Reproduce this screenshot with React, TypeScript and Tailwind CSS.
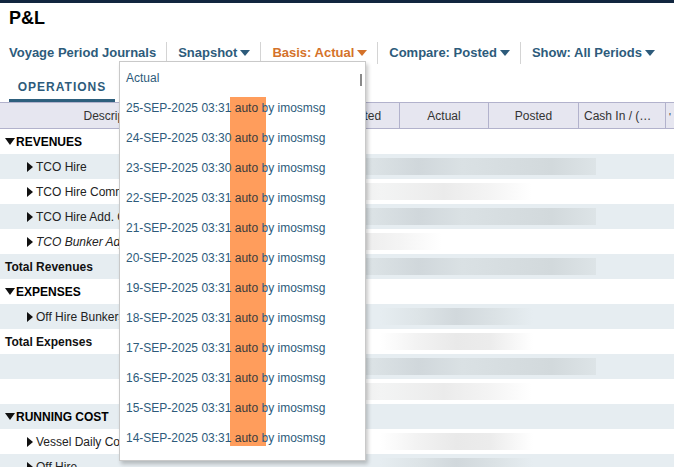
import React from "react";

type Row = {
  label: string;
  kind: "section" | "child" | "total" | "blank";
  italic?: boolean;
  bar?: "long" | "fade" | "short" | "midGray" | "midWhite";
};

const rows: Row[] = [
  { label: "REVENUES", kind: "section" },
  { label: "TCO Hire", kind: "child", bar: "long" },
  { label: "TCO Hire Commission", kind: "child", bar: "fade" },
  { label: "TCO Hire Add. Commission", kind: "child", bar: "long" },
  { label: "TCO Bunker Adjustment", kind: "child", italic: true, bar: "short" },
  { label: "Total Revenues", kind: "total", bar: "long" },
  { label: "EXPENSES", kind: "section" },
  { label: "Off Hire Bunkers", kind: "child", bar: "midGray" },
  { label: "Total Expenses", kind: "total", bar: "midWhite" },
  { label: "", kind: "blank", bar: "long" },
  { label: "", kind: "blank", bar: "fade" },
  { label: "RUNNING COST", kind: "section" },
  { label: "Vessel Daily Cost", kind: "child", bar: "midWhite" },
  { label: "Off Hire", kind: "child", bar: "midGray" },
];

const barClass: Record<NonNullable<Row["bar"]>, string> = {
  long: "ml-[72px] w-[296px] bg-[linear-gradient(90deg,#d1d8dc_0%,#dbe2e5_25%,#d0d7db_40%,#dae1e4_55%,#d6dde0_70%,#d2d9dc_85%,#dde4e7_100%)]",
  fade: "ml-[72px] w-[232px] bg-[linear-gradient(90deg,#e2e2e2_0%,#f3f4f4_35%,#ebebeb_62%,#f4f4f4_82%,#ffffff_100%)]",
  short: "ml-[72px] w-[142px] bg-[linear-gradient(90deg,#e2e2e2_0%,#ececec_40%,#f4f4f4_70%,#ffffff_100%)]",
  midGray: "ml-[152px] w-[153px] bg-[linear-gradient(90deg,#e6edf1_0%,#dde4e7_25%,#d1d8dc_50%,#dbe2e5_75%,#e6edf1_100%)]",
  midWhite: "ml-[152px] w-[153px] bg-[linear-gradient(90deg,#ffffff_0%,#f2f2f2_25%,#e9e9e9_50%,#ececec_72%,#ffffff_100%)]",
};

const dates = [
  "25-SEP-2025 03:31",
  "24-SEP-2025 03:30",
  "23-SEP-2025 03:30",
  "22-SEP-2025 03:31",
  "21-SEP-2025 03:31",
  "20-SEP-2025 03:31",
  "19-SEP-2025 03:31",
  "18-SEP-2025 03:31",
  "17-SEP-2025 03:31",
  "16-SEP-2025 03:31",
  "15-SEP-2025 03:31",
  "14-SEP-2025 03:31",
];

const Caret = ({ className }: { className?: string }) => (
  <svg width="10" height="6" viewBox="0 0 10 6" className={className}>
    <path d="M0 0 L10 0 L5 6 Z" fill="currentColor" />
  </svg>
);

const Separator = () => <div className="ml-[10px] mr-[11px] h-[22px] w-px bg-[#d4d4d4]" />;

const ToolbarItem = ({ label, orange }: { label: string; orange?: boolean }) => (
  <div className={`flex items-center gap-[3px] ${orange ? "text-[#d4722a]" : "text-[#2d5b7b]"}`}>
    <span>{label}</span>
    <Caret />
  </div>
);

const SnapshotMenu = () => (
  <div className="absolute left-[119px] top-[61px] w-[247px] h-[400px] bg-white border border-[#c9c9c9] shadow-[2px_3px_4px_rgba(0,0,0,0.22)] text-[12px] text-[#2d5b7b]">
    <div className="absolute left-[110px] top-[35px] w-[36px] h-[349px] bg-[#ff9d5c]" />
    <div className="absolute left-[240px] top-[12px] w-[2px] h-[12px] bg-[#8a8a8a]" />
    <div className="relative">
      <div className="h-[30px] flex items-center pl-[6px] pt-[1px]">Actual</div>
      {dates.map((d) => (
        <div key={d} className="h-[30px] flex items-center pl-[6px] pt-[1px] whitespace-pre">
          <span>{d} </span>
          <span className="text-[#3a3a3a]">auto</span>
          <span> by imosmsg</span>
        </div>
      ))}
    </div>
  </div>
);

const TableRow = ({ row, index }: { row: Row; index: number }) => {
  const gray = index % 2 === 1;
  return (
    <div className={`h-[25px] flex items-center ${gray ? "bg-[#e6edf1]" : "bg-white"}`}>
      <div className="w-[228px] shrink-0 flex items-center whitespace-nowrap overflow-hidden">
        {row.kind === "section" && (
          <div className="flex items-center pl-[5px] font-bold text-black">
            <svg width="10" height="7" viewBox="0 0 10 7" className="mr-[1px]">
              <path d="M0 0 L10 0 L5 7 Z" fill="#111" />
            </svg>
            <span>{row.label}</span>
          </div>
        )}
        {row.kind === "child" && (
          <div className={`flex items-center pl-[27px] text-[#222] ${row.italic ? "italic" : ""}`}>
            <svg width="6" height="10" viewBox="0 0 6 10" className="mr-[3px]">
              <path d="M0 0 L6 5 L0 10 Z" fill="#111" />
            </svg>
            <span>{row.label}</span>
          </div>
        )}
        {row.kind === "total" && <span className="pl-[5px] font-bold text-[#111]">{row.label}</span>}
      </div>
      <div className="flex-1 flex items-center">
        {row.bar && <div className={`h-[17px] ${barClass[row.bar]}`} />}
      </div>
    </div>
  );
};

const App = () => {
  return (
    <div className="relative w-[674px] h-[467px] overflow-hidden bg-white font-['Liberation_Sans',Arial,sans-serif]">
      <div className="h-[3px] bg-[#11263f]" />
      <div className="h-[31px] flex items-center pl-[9px] text-[18px] font-bold text-black">P&amp;L</div>
      <div className="h-[37px] flex items-center pl-[9px] text-[13px] font-bold">
        <span className="text-[#2d5b7b]">Voyage Period Journals</span>
        <Separator />
        <ToolbarItem label="Snapshot" />
        <Separator />
        <ToolbarItem label="Basis: Actual" orange />
        <Separator />
        <ToolbarItem label="Compare: Posted" />
        <Separator />
        <ToolbarItem label="Show: All Periods" />
      </div>
      <div className="h-[31px] flex">
        <div className="ml-[9px] w-[106px] border-b-[3px] border-[#2e5f7d] flex items-center justify-center pt-[4px] text-[12px] font-bold tracking-[1px] text-[#2d5b7b]">
          OPERATIONS
        </div>
      </div>
      <div className="h-[27px] flex bg-[#e6e6f0] border-y border-[#b2b2cc] text-[12px] text-[#333]">
        <div className="w-[228px] shrink-0 flex items-center justify-center border-r border-[#b2b2cc]">Description</div>
        <div className="w-[82px] shrink-0 flex items-center justify-center border-r border-[#b2b2cc]">Budget</div>
        <div className="w-[90px] shrink-0 flex items-center justify-center border-r border-[#b2b2cc]">Estimated</div>
        <div className="w-[89px] shrink-0 flex items-center justify-center border-r border-[#b2b2cc]">Actual</div>
        <div className="w-[90px] shrink-0 flex items-center justify-center border-r border-[#b2b2cc]">Posted</div>
        <div className="w-[87px] shrink-0 flex items-center border-r border-[#b2b2cc] pl-[5px] pr-[5px]">
          <span className="truncate">Cash In / (Out)</span>
        </div>
        <div className="flex-1 flex items-start pt-[7px] pl-[3px] text-[10px]">'</div>
      </div>
      <div className="text-[12px]">
        {rows.map((row, i) => (
          <TableRow key={i} row={row} index={i} />
        ))}
      </div>
      <SnapshotMenu />
    </div>
  );
};

export default App;
